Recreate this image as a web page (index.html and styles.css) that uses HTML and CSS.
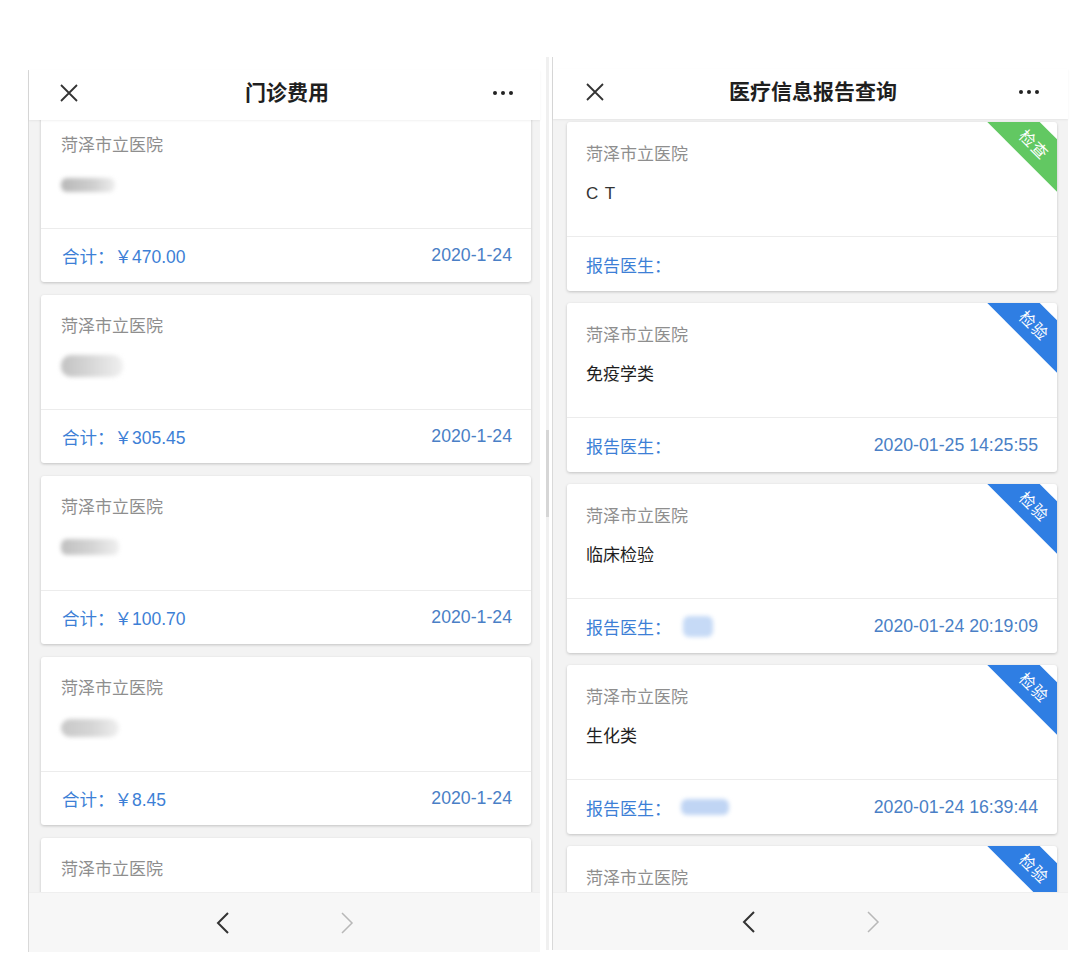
FILE: index.html
```html
<!DOCTYPE html>
<html lang="zh-CN">
<head>
<meta charset="utf-8">
<title>门诊费用 / 医疗信息报告查询</title>
<link rel="stylesheet" href="styles.css">
</head>
<body>
<div class="screens">
  <section class="phone phone-left">
    <header class="nav">
      <span class="nav-close"><svg width="18" height="18" viewBox="0 0 18 18"><path d="M1 1L17 17M17 1L1 17" stroke="#333" stroke-width="1.8" fill="none"/></svg></span>
      <h1 class="nav-title">门诊费用</h1>
      <span class="nav-more"><svg width="22" height="6" viewBox="0 0 22 6"><circle cx="3" cy="3" r="2" fill="#222"/><circle cx="11" cy="3" r="2" fill="#222"/><circle cx="19" cy="3" r="2" fill="#222"/></svg></span>
    </header>
    <div class="list">
      <article class="card">
        <div class="card-body">
          <p class="hospital">菏泽市立医院</p>
          <p class="item"><span class="blur blob-a"></span></p>
        </div>
        <div class="card-foot"><span class="total">合计：￥470.00</span><span class="date">2020-1-24</span></div>
      </article>
      <article class="card">
        <div class="card-body">
          <p class="hospital">菏泽市立医院</p>
          <p class="item"><span class="blur blob-b"></span></p>
        </div>
        <div class="card-foot"><span class="total">合计：￥305.45</span><span class="date">2020-1-24</span></div>
      </article>
      <article class="card">
        <div class="card-body">
          <p class="hospital">菏泽市立医院</p>
          <p class="item"><span class="blur blob-c"></span></p>
        </div>
        <div class="card-foot"><span class="total">合计：￥100.70</span><span class="date">2020-1-24</span></div>
      </article>
      <article class="card">
        <div class="card-body">
          <p class="hospital">菏泽市立医院</p>
          <p class="item"><span class="blur blob-d"></span></p>
        </div>
        <div class="card-foot"><span class="total">合计：￥8.45</span><span class="date">2020-1-24</span></div>
      </article>
      <article class="card">
        <div class="card-body">
          <p class="hospital">菏泽市立医院</p>
          <p class="item"></p>
        </div>
        <div class="card-foot"></div>
      </article>
    </div>
    <footer class="toolbar">
      <svg class="chev" width="14" height="22" viewBox="0 0 14 22"><path d="M12 1L2 11L12 21" fill="none" stroke="#333" stroke-width="2"/></svg>
      <svg class="chev" width="14" height="22" viewBox="0 0 14 22"><path d="M2 1L12 11L2 21" fill="none" stroke="#b8b8b8" stroke-width="1.5"/></svg>
    </footer>
  </section>

  <div class="gutter"><div class="gutter-bar"></div></div>

  <section class="phone phone-right">
    <div class="status"></div>
    <header class="nav">
      <span class="nav-close"><svg width="18" height="18" viewBox="0 0 18 18"><path d="M1 1L17 17M17 1L1 17" stroke="#333" stroke-width="1.8" fill="none"/></svg></span>
      <h1 class="nav-title">医疗信息报告查询</h1>
      <span class="nav-more"><svg width="22" height="6" viewBox="0 0 22 6"><circle cx="3" cy="3" r="2" fill="#222"/><circle cx="11" cy="3" r="2" fill="#222"/><circle cx="19" cy="3" r="2" fill="#222"/></svg></span>
    </header>
    <div class="list">
      <article class="card">
        <span class="ribbon ribbon-green">检查</span>
        <div class="card-body">
          <p class="hospital">菏泽市立医院</p>
          <p class="item item-ct">C T</p>
        </div>
        <div class="card-foot"><span class="doctor">报告医生：</span></div>
      </article>
      <article class="card">
        <span class="ribbon ribbon-blue">检验</span>
        <div class="card-body">
          <p class="hospital">菏泽市立医院</p>
          <p class="item">免疫学类</p>
        </div>
        <div class="card-foot"><span class="doctor">报告医生：</span><span class="date">2020-01-25 14:25:55</span></div>
      </article>
      <article class="card">
        <span class="ribbon ribbon-blue">检验</span>
        <div class="card-body">
          <p class="hospital">菏泽市立医院</p>
          <p class="item">临床检验</p>
        </div>
        <div class="card-foot"><span class="doctor">报告医生：<span class="blur blob-blue-a"></span></span><span class="date">2020-01-24 20:19:09</span></div>
      </article>
      <article class="card">
        <span class="ribbon ribbon-blue">检验</span>
        <div class="card-body">
          <p class="hospital">菏泽市立医院</p>
          <p class="item">生化类</p>
        </div>
        <div class="card-foot"><span class="doctor">报告医生：<span class="blur blob-blue-b"></span></span><span class="date">2020-01-24 16:39:44</span></div>
      </article>
      <article class="card">
        <span class="ribbon ribbon-blue">检验</span>
        <div class="card-body">
          <p class="hospital">菏泽市立医院</p>
          <p class="item"></p>
        </div>
        <div class="card-foot"></div>
      </article>
    </div>
    <footer class="toolbar">
      <svg class="chev" width="14" height="22" viewBox="0 0 14 22"><path d="M12 1L2 11L12 21" fill="none" stroke="#333" stroke-width="2"/></svg>
      <svg class="chev" width="14" height="22" viewBox="0 0 14 22"><path d="M2 1L12 11L2 21" fill="none" stroke="#b8b8b8" stroke-width="1.5"/></svg>
    </footer>
  </section>
</div>
</body>
</html>
```

FILE: styles.css
```css
* { box-sizing: border-box; margin: 0; padding: 0; }

html, body { background: #fff; }

body {
  width: 1080px;
  height: 976px;
  overflow: hidden;
  font-family: "Liberation Sans", "Noto Sans CJK SC", sans-serif;
}

.screens {
  display: flex;
  align-items: flex-start;
}

.phone {
  display: flex;
  flex-direction: column;
  background: #f3f3f3;
  border-left: 1px solid #d9d9d9;
}

.phone-left {
  margin-left: 28px;
  margin-top: 70px;
  width: 512px;
  height: 882px;
}

.phone-right {
  margin-top: 57px;
  width: 516px;
  height: 893px;
}

.gutter {
  width: 12px;
  height: 893px;
  margin-top: 57px;
  padding-left: 6px;
}

.gutter-bar {
  width: 3px;
  height: 100%;
  background: linear-gradient(to bottom, #f0f0f0 0, #f0f0f0 373px, #d6d6d6 373px, #d6d6d6 460px, #f0f0f0 460px);
}

.status {
  height: 12px;
  background: #fff;
  flex: none;
}

.nav {
  flex: none;
  height: 50px;
  background: #fff;
  display: grid;
  grid-template-columns: 1fr auto 1fr;
  align-items: center;
  padding: 0 26px 4px 31px;
  box-shadow: 0 1px 2px rgba(0, 0, 0, 0.06);
  position: relative;
  z-index: 2;
}

.phone-right .nav {
  padding: 0 28px 4px 33px;
}

.nav-close, .nav-more {
  display: flex;
  align-items: center;
}

.nav-more { justify-self: end; }

.nav-title {
  font-size: 21px;
  font-weight: 700;
  color: #1f1f1f;
  line-height: 28px;
}

.list {
  flex: 1;
  overflow: hidden;
  display: flex;
  flex-direction: column;
  gap: 13px;
}

.phone-left .list {
  padding: 0 9px 0 12px;
}

.phone-left .card:first-child {
  margin-top: -6px;
}

.phone-right .list {
  padding: 3px 11px 0 14px;
  gap: 12px;
}

.card {
  flex: none;
  height: 168px;
  background: #fff;
  border-radius: 3px;
  box-shadow: 0 1px 3px rgba(0, 0, 0, 0.2);
  position: relative;
  overflow: hidden;
  display: flex;
  flex-direction: column;
}

.phone-right .card {
  height: 169px;
}

.card-body {
  flex: none;
  height: 114px;
  padding: 20px 20px 0 20px;
}

.phone-right .card-body {
  padding-top: 21px;
  padding-left: 19px;
}

.hospital {
  font-size: 17px;
  line-height: 24px;
  color: #8e8e8e;
}

.item {
  margin-top: 15px;
  height: 24px;
  font-size: 17px;
  line-height: 24px;
  color: #1e1e1e;
  display: flex;
  align-items: center;
}

.item-ct {
  color: #333;
  letter-spacing: 1px;
}

.card-foot {
  flex: 1;
  border-top: 1px solid #ececec;
  display: flex;
  align-items: center;
  justify-content: space-between;
  padding: 0 19px 0 21px;
  font-size: 17px;
  color: #3d7fd6;
}

.phone-right .card-foot {
  padding: 0 19px 0 19px;
}

.total {
  font-size: 17.5px;
}

.date {
  color: #4a7fc6;
  font-size: 17.7px;
}

.doctor {
  display: flex;
  align-items: center;
}

.blur {
  display: inline-block;
  border-radius: 6px;
  filter: blur(2px);
}

.blob-a { width: 54px; height: 14px; background: linear-gradient(to right, #b8b8b8, #cfcfcf 60%, #eee); }
.blob-b { width: 62px; height: 22px; background: linear-gradient(to right, #c2c2c2, #d8d8d8 50%, #f0f0f0); border-radius: 10px; }
.blob-c { width: 58px; height: 16px; background: linear-gradient(to right, #c0c0c0, #d5d5d5 55%, #f0f0f0); }
.blob-d { width: 58px; height: 18px; background: linear-gradient(to right, #c8c8c8, #d6d6d6 55%, #efefef); border-radius: 9px; }

.blob-blue-a { width: 30px; height: 21px; margin-left: 12px; background: #c6daf6; }
.blob-blue-b { width: 48px; height: 16px; margin-left: 10px; background: #c0d5f4; }

.ribbon {
  position: absolute;
  top: 3px;
  right: -38px;
  width: 120px;
  height: 37px;
  transform: rotate(45deg);
  color: #fff;
  font-size: 16px;
  display: flex;
  align-items: center;
  justify-content: center;
  letter-spacing: 1px;
  z-index: 1;
}

.ribbon-green { background: #62c862; }
.ribbon-blue { background: #2f7ee3; }

.toolbar {
  flex: none;
  height: 60px;
  background: #f7f7f7;
  border-top: 1px solid #efefef;
  display: flex;
  justify-content: center;
  align-items: center;
  gap: 110px;
  position: relative;
  z-index: 2;
}

.phone-right .toolbar {
  height: 58px;
}

.chev { display: block; }
```
